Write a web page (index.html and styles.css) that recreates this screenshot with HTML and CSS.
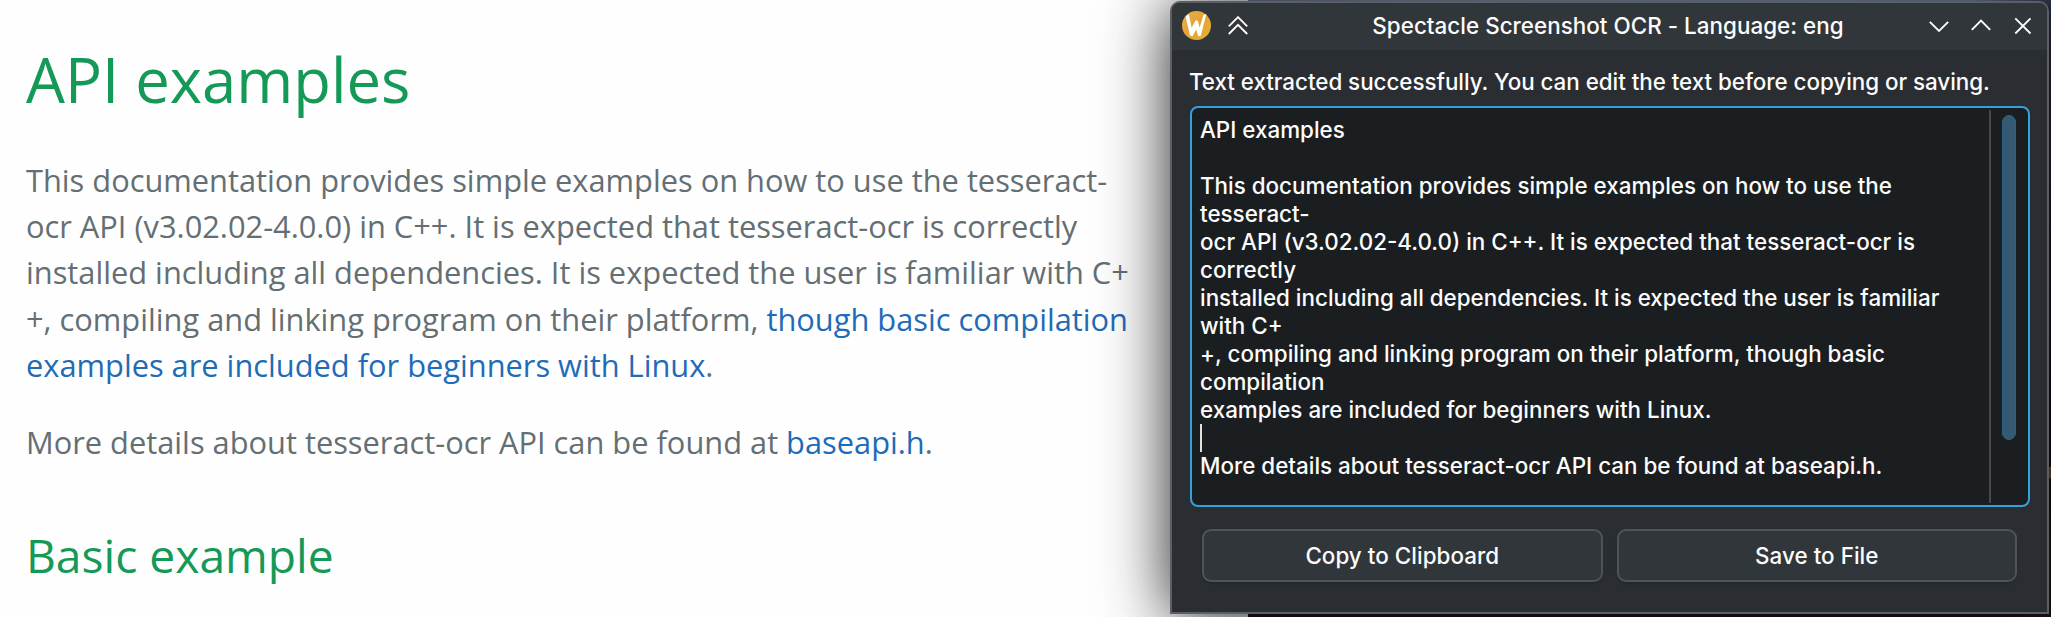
FILE: index.html
```
<!DOCTYPE html>
<html lang="en">
<head>
<meta charset="utf-8">
<title>Spectacle Screenshot OCR</title>
<link rel="stylesheet" href="styles.css">
</head>
<body>
<main class="doc">
  <h1 class="doc-title">API examples</h1>
  <p class="doc-text">This documentation provides simple examples on how to use the tesseract-<br>ocr API (v3.02.02-4.0.0) in C++. It is expected that tesseract-ocr is correctly<br>installed including all dependencies. It is expected the user is familiar with C+<br>+, compiling and linking program on their platform, <a class="link">though basic compilation<br>examples are included for beginners with Linux</a>.</p>
  <p class="doc-text">More details about tesseract-ocr API can be found at <a class="link">baseapi.h</a>.</p>
  <h2 class="doc-subtitle">Basic example</h2>
</main>
<div class="desktop"></div>

<section class="window">
  <header class="titlebar">
    <div class="titlebar-side">
      <svg class="app-icon" viewBox="0 0 29 29">
        <defs><linearGradient id="gold" x1="0" y1="0" x2="1" y2="1"><stop offset="0" stop-color="#e9b04e"/><stop offset=".5" stop-color="#e3a336"/><stop offset="1" stop-color="#e8b42f"/></linearGradient></defs>
        <circle cx="14.5" cy="14.5" r="14.5" fill="url(#gold)"/>
        <path d="M3.6 5.4 6.8 3.2 9.6 16.8 13.6 9.6 15.8 9.8 17.6 16.4 21.6 3.8 24.4 3 18.6 25.2 16.2 25 14.2 18.4 10.6 25.2 8 24.6Z" fill="#fff"/>
      </svg>
      <svg class="shade" viewBox="0 0 20 20"><path d="M.8 10.400 10 1.200l9.200 9.200M.8 18 10 8.800l9.200 9.200"/></svg>
    </div>
    <span class="window-title">Spectacle Screenshot OCR - Language: eng</span>
    <div class="titlebar-side titlebar-end">
      <svg class="control" viewBox="0 0 20 20"><path d="M.8 5.800 10 15l9.200-9.200"/></svg>
      <svg class="control" viewBox="0 0 20 20"><path d="M.8 13.800 10 4.600l9.200 9.200"/></svg>
      <svg class="control" viewBox="0 0 20 20"><path d="M2.300 2.300l15.200 15.200M17.500 2.300 2.300 17.500"/></svg>
    </div>
  </header>
  <div class="content">
    <p class="message">Text extracted successfully. You can edit the text before copying or saving.</p>
    <div class="editor">
      <div class="editor-text">API examples

This documentation provides simple examples on how to use the
tesseract-
ocr API (v3.02.02-4.0.0) in C++. It is expected that tesseract-ocr is
correctly
installed including all dependencies. It is expected the user is familiar
with C+
+, compiling and linking program on their platform, though basic
compilation
examples are included for beginners with Linux.
<span class="caret"></span>
More details about tesseract-ocr API can be found at baseapi.h.</div>
      <div class="scrollbar"><div class="thumb"></div></div>
    </div>
    <div class="actions">
      <button class="button">Copy to Clipboard</button>
      <button class="button">Save to File</button>
    </div>
  </div>
</section>
</body>
</html>
```
FILE: styles.css
```
* { box-sizing: border-box; }

body {
  position: relative;
  display: flex;
  width: 2051px;
  height: 617px;
  margin: 0;
  overflow: hidden;
  background: #fff;
}

/* Documentation page */
.doc {
  width: 1248px;
  padding: 37px 0 0 26px;
  background: #fefefe;
  font-family: "Open Sans", sans-serif;
  color: #646f74;
  white-space: nowrap;
}

.doc-title,
.doc-subtitle {
  margin: 0;
  font-weight: 400;
  color: #159957;
}

.doc-title {
  margin-bottom: 36px;
  font-size: 61.6px;
  line-height: 84px;
}

.doc-text {
  margin: 0 0 30.8px;
  font-size: 30.8px;
  line-height: 46.2px;
}

.doc-subtitle {
  margin-top: 59px;
  font-size: 46.2px;
  line-height: 64px;
}

.link { color: #1e6bb8; }

/* Wallpaper visible around the window */
.desktop {
  flex: 1;
  background:
    linear-gradient(90deg, #71869b, #8ba2b6 40%, #7f98b0 90%, #2d3850) top / 100% 6px no-repeat,
    linear-gradient(#2c3044 6px, #17182a 300px, #10131c 467px, #80502a 467px, #80502a 478px, #15110f 479px, #2a1c12 560px, #1c1514);
}

/* Dialog window */
.window {
  position: absolute;
  left: 1170px;
  top: 1px;
  display: flex;
  flex-direction: column;
  width: 879px;
  height: 613px;
  border: 2px solid #5b5e62;
  border-radius: 10px 10px 0 0;
  background: #2a2d31;
  box-shadow: 0 4px 66px rgba(0, 0, 0, .88);
  font: 500 22.4px/28px Inter, sans-serif;
  color: #fcfcfc;
}

.titlebar {
  display: grid;
  grid-template-columns: 1fr auto 1fr;
  align-items: center;
  height: 47px;
  padding: 0 14px 2px 10px;
  border-radius: 8px 8px 0 0;
  background: #31363a;
}

.titlebar-side {
  display: flex;
  align-items: center;
}

.titlebar-end {
  justify-content: flex-end;
  gap: 22px;
}

.app-icon {
  width: 29px;
  height: 29px;
}

.shade,
.control {
  width: 20px;
  height: 20px;
  fill: none;
  stroke: #fcfcfc;
  stroke-width: 1.9;
}

.shade { margin-left: 17px; }

.window-title {
  margin-left: 1px;
  letter-spacing: .03px;
}

.content {
  display: flex;
  flex: 1;
  flex-direction: column;
  padding: 18px 17px 30px 18px;
}

.message {
  margin: 0 0 10px -1px;
  letter-spacing: -.04px;
}

.editor {
  display: flex;
  justify-content: space-between;
  height: 401px;
  padding: 2px 2px 2px 8px;
  border: 2px solid #35a0df;
  border-radius: 8px;
  background: #1b1e20;
}

.editor-text {
  padding-top: 6px;
  white-space: pre;
}

.caret {
  display: inline-block;
  width: 2px;
  height: 28px;
  background: #e4e0dc;
  vertical-align: top;
}

.scrollbar {
  width: 37px;
  padding: 5px 0 0 11px;
  border-left: 2px solid #47494b;
}

.thumb {
  width: 14px;
  height: 325px;
  border: 1px solid #2b6382;
  border-radius: 7px;
  background: #335a72;
}

.actions {
  display: flex;
  gap: 14px;
  margin-top: 22px;
  padding: 0 13px 0 12px;
}

.button {
  flex: 1;
  height: 53px;
  padding: 0;
  border: 2px solid #505458;
  border-radius: 9px;
  background: #31363a;
  box-shadow: 0 2px 2px rgba(0, 0, 0, .12);
  font: inherit;
  letter-spacing: .04px;
  color: inherit;
}
```
